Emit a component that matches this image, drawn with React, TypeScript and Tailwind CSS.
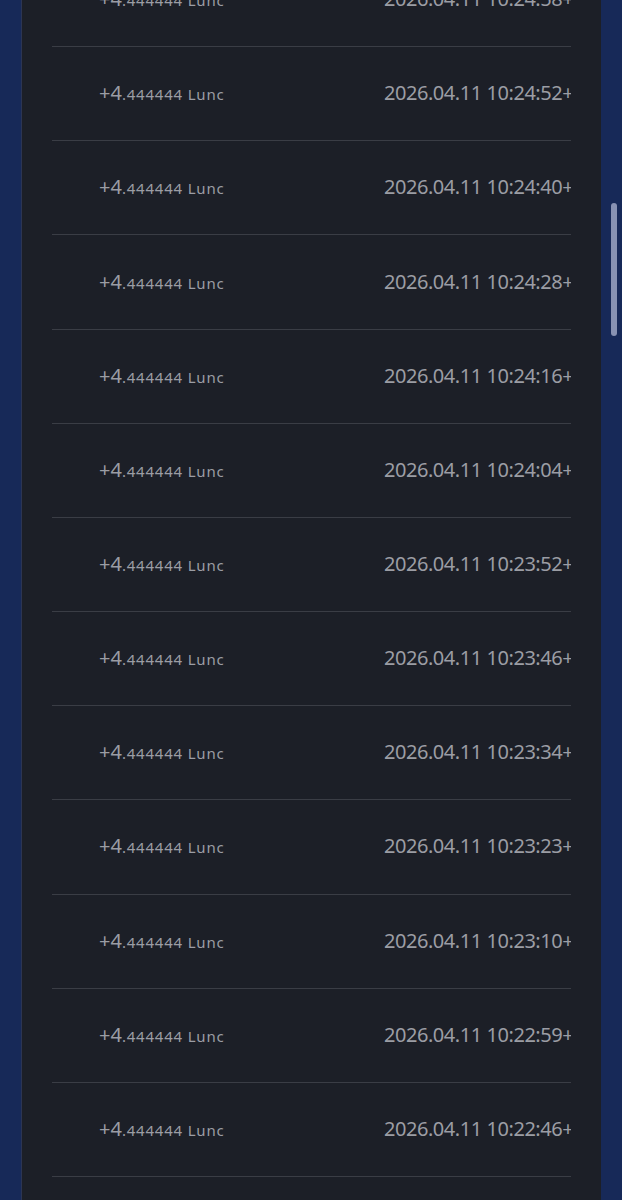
import React from 'react';

// rows of the reward history, newest first (top row is cut off by the scroll)
const times = [
  '10:24:58',
  '10:24:52',
  '10:24:40',
  '10:24:28',
  '10:24:16',
  '10:24:04',
  '10:23:52',
  '10:23:46',
  '10:23:34',
  '10:23:23',
  '10:23:10',
  '10:22:59',
  '10:22:46',
  '10:22:34',
];

function Row({ time }: { time: string }) {
  return (
    <div className="flex h-[94.17px] shrink-0 items-center overflow-hidden whitespace-nowrap border-b border-[#3a3d45] text-[#9b9da4]">
      <div className="w-[332px] shrink-0 pl-[47px] pb-[1px]">
        <span className="text-[20px]">+4</span>
        <span className="text-[15px] tracking-[0.8px]">.444444 Lunc</span>
      </div>
      <span className="pb-[1px] text-[20px] tracking-[-0.45px]">2026.04.11 {time}+08:00</span>
    </div>
  );
}

export default function App() {
  return (
    <div
      className="relative h-[1200px] w-[622px] overflow-hidden bg-[#172958]"
      style={{ fontFamily: '"Noto Sans", "Liberation Sans", sans-serif' }}
    >
      <div className="ml-[21px] flex h-full w-[580px] flex-col border-l border-[#2c3553] bg-[#1c1f27] px-[30px]">
        <div className="-mt-[47px] flex flex-col">
          {times.map((t) => (
            <Row key={t} time={t} />
          ))}
        </div>
      </div>
      {/* scrollbar */}
      <div className="absolute left-[611px] top-[203px] h-[133px] w-[6px] rounded-full bg-[#8892b3]" />
    </div>
  );
}
